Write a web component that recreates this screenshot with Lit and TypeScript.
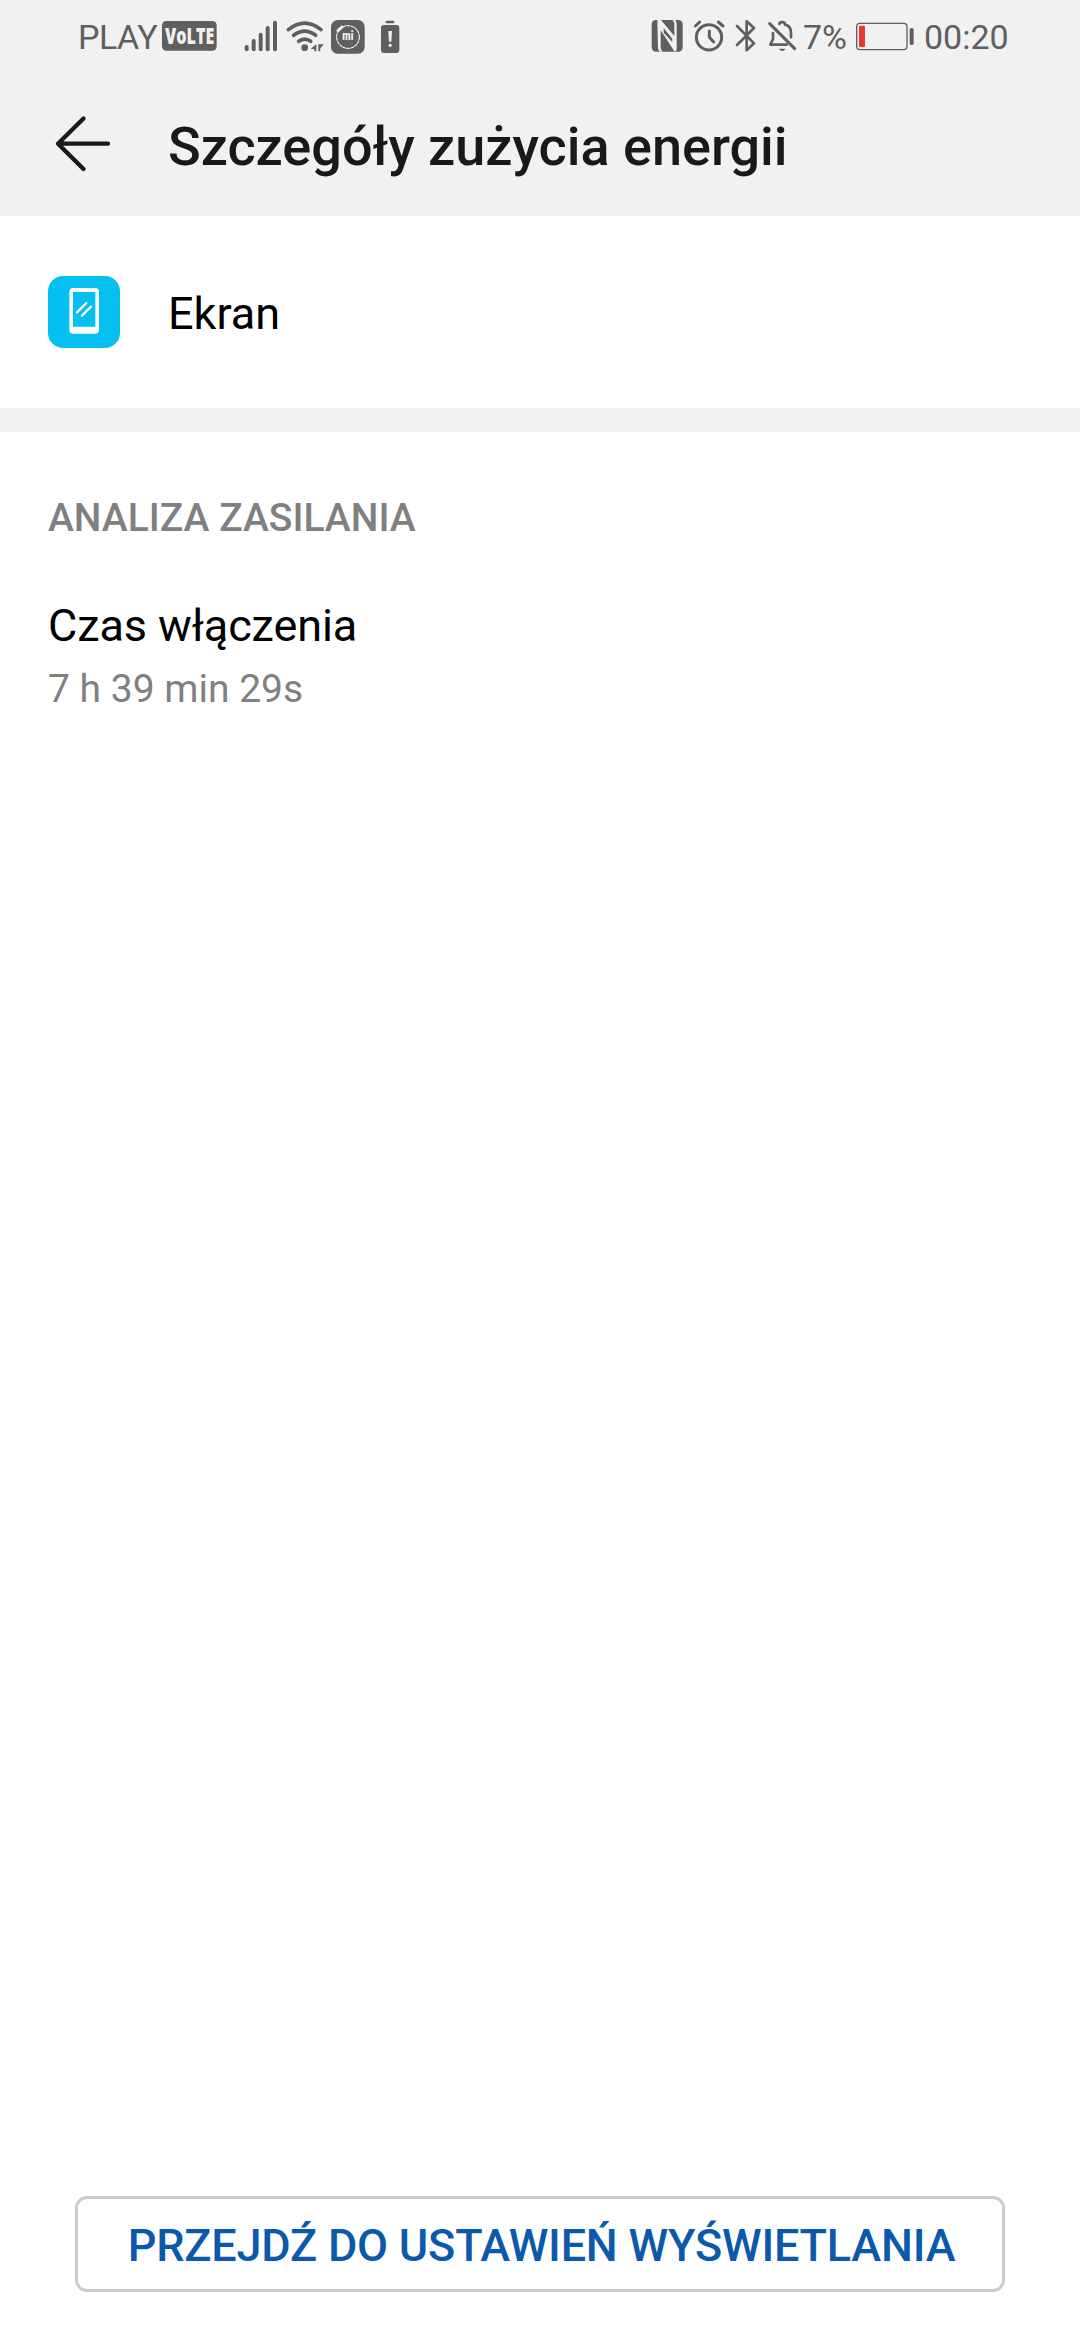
import { LitElement, html, css, svg } from "lit";
import { customElement } from "lit/decorators.js";

@customElement("status-bar")
class StatusBar extends LitElement {
  static styles = css`
    :host { display: flex; height: 75px; padding-left: 78px; color: #5f5f5f; font: 400 34px/74px Roboto, sans-serif; }
    svg { display: block; flex: none; height: 75px; fill: #5f5f5f; overflow: visible; }
    .carrier { width: 84px; flex: none; white-space: nowrap; letter-spacing: -0.5px; }
    .percent { width: 52px; margin-left: -1px; flex: none; white-space: nowrap; }
    .clock { white-space: nowrap; }
    .volte { width: 56px; }
    .signal { width: 44px; margin-left: 22px; }
    .wifi { width: 42px; }
    .app { width: 42px; }
    .low { width: 30px; margin-left: 6px; }
    .nfc { width: 40px; margin-left: 244px; }
    .alarm { width: 40px; }
    .bluetooth { width: 30px; margin-left: 3px; }
    .mute { width: 42px; margin-left: 1px; }
    .battery { width: 62px; margin-left: -1px; margin-right: 8px; }
    .line { fill: none; stroke: #5f5f5f; stroke-linecap: round; stroke-linejoin: round; }
    .light { fill: none; stroke: #f1f1f1; stroke-linecap: round; }
    .badge { font: 800 68px "Open Sans", sans-serif; fill: #f1f1f1; }
    .mi { font: 900 36px Roboto, sans-serif; fill: #f1f1f1; }
    .red { fill: #e8392c; }
  `;
  render() {
    return html`
      <span class="carrier">PLAY</span>
      <svg class="volte" viewBox="306 0 168 225">
        <rect x="306" y="63" width="164" height="89" rx="13" />
        <text class="badge" x="315" y="132" textLength="148" lengthAdjust="spacingAndGlyphs">VoLTE</text>
      </svg>
      <svg class="signal" viewBox="30 0 132 225">
        ${[[50, 135], [71, 117], [92, 98], [113, 78], [135, 62]].map(
          ([x, y]) => svg`<rect x=${x - 6} y=${y} width="12" height=${154 - y} rx="6" />`
        )}
      </svg>
      <svg class="wifi" viewBox="162 0 126 225">
        <path class="line" stroke-width="11" d="M175 89Q224 50 273 89M191 106Q224 81 257 106M206 124Q224 111 242 124" />
        <circle cx="224" cy="143" r="10" />
        <path d="M259 132V154H253V147H242ZM265 154V133H281L271 145V154Z" />
      </svg>
      <svg class="app" viewBox="288 0 126 225">
        <rect x="303" y="60" width="101" height="101" rx="20" />
        <circle class="light" cx="354" cy="111" r="34" stroke-width="3.500" stroke-dasharray="8 4" />
        <path class="light" stroke-width="9" d="M324 92L336 81" />
        <text class="mi" x="337" y="121" textLength="33" lengthAdjust="spacingAndGlyphs">mi</text>
      </svg>
      <svg class="low" viewBox="432 0 90 225">
        <rect x="467" y="62" width="26" height="8" rx="3" />
        <rect x="453" y="75" width="55" height="84" rx="9" />
        <path d="M475 93H486L484 125H477Z" fill="#f1f1f1" />
        <circle cx="480.500" cy="136" r="5" fill="#f1f1f1" />
      </svg>
      <svg class="nfc" viewBox="24 0 120 225">
        <rect x="35" y="60" width="93" height="95" rx="13" />
        <path d="M52 60L63 60L103 108V70L98 60H106L110 70V150L104 155L62 91V146L68 155H59L54 146Z" fill="#f1f1f1" />
        <path d="M71 84L97 116V126L71 98Z" />
      </svg>
      <svg class="alarm" viewBox="144 0 120 225">
        <circle class="line" cx="207" cy="112" r="38" stroke-width="9" />
        <path class="line" stroke-width="9" d="M166 78L179 66M235 66L249 78M208 93V112L221 126" />
      </svg>
      <svg class="bluetooth" viewBox="273 0 90 225">
        <path class="line" stroke-width="8" d="M291 78L342 130L320 151V64L342 84L291 135" />
      </svg>
      <svg class="mute" viewBox="366 0 126 225">
        <path class="line" stroke-width="9" d="M389 71L464 146" />
        <path class="line" stroke-width="8" d="M418 72C419 64 435 64 435 74C449 77 453 88 453 98V112M399 99V117L391 134H440" />
        <path d="M416 146H437Q427 160 416 146Z" />
      </svg>
      <span class="percent">7%</span>
      <svg class="battery" viewBox="192 0 186 225">
        <rect class="line" x="200" y="70" width="151" height="79" rx="10" stroke-width="4" />
        <rect class="red" x="207" y="77" width="18" height="64" rx="4" />
        <rect x="359" y="84" width="12" height="51" rx="5" />
      </svg>
      <span class="clock">00:20</span>
    `;
  }
}

@customElement("app-root")
class AppRoot extends LitElement {
  static styles = css`
    :host { display: flex; flex-direction: column; height: 2340px; background: #fff; color: #000; font-family: Roboto, sans-serif; }
    .top { background: #f1f1f1; height: 216px; flex: none; }
    .bar { display: flex; height: 141px; }
    .back { width: 168px; height: 141px; flex: none; fill: none; stroke: #191919; stroke-width: 4.300; stroke-linecap: round; stroke-linejoin: round; }
    h1 { margin: 0; font-size: 54px; line-height: 143px; font-weight: 500; color: #191919; white-space: nowrap; }
    .item { display: flex; align-items: center; height: 192px; flex: none; padding-left: 48px; gap: 48px; font-size: 45px; }
    .item svg { width: 72px; height: 72px; }
    .name { line-height: 53px; padding-top: 3px; }
    .divider { height: 24px; flex: none; background: #f3f3f3; }
    .section { flex: 1; padding: 63px 48px 0; }
    h2 { margin: 0; font-size: 39px; line-height: 46px; font-weight: 500; color: #808080; }
    .label { margin-top: 58px; font-size: 45px; line-height: 53px; letter-spacing: -0.1px; }
    .value { margin-top: 14px; font-size: 39px; line-height: 46px; color: #808080; }
    .action { box-sizing: border-box; height: 96px; margin: 0 75px 48px; border: 3px solid #ccc; border-radius: 12px; background: #fff; color: #0a59ab; font: 500 45px/87px Roboto, sans-serif; letter-spacing: -0.200px; padding: 3px 0 0 3px; white-space: nowrap; }
  `;
  render() {
    return html`
      <div class="top">
        <status-bar></status-bar>
        <div class="bar">
          <svg class="back" viewBox="0 75 168 141"><path d="M83.500 118.500L58 143.700L83.500 169M58 143.700H108" /></svg>
          <h1>Szczegóły zużycia energii</h1>
        </div>
      </div>
      <div class="item">
        <svg viewBox="54 78 216 216">
          <rect x="54" y="78" width="216" height="216" rx="46" fill="#04bff0" />
          <path fill="#fff" fill-rule="evenodd" d="M130 114H195Q207 114 207 126V239Q207 251 195 251H130Q118 251 118 239V126Q118 114 130 114ZM129 126V230H196V126Z" />
          <path stroke="#fff" stroke-width="7" stroke-linecap="round" d="M141 187L169 159M156 197L183 170" />
        </svg>
        <span class="name">Ekran</span>
      </div>
      <div class="divider"></div>
      <div class="section">
        <h2>ANALIZA ZASILANIA</h2>
        <div class="label">Czas włączenia</div>
        <div class="value">7 h 39 min 29s</div>
      </div>
      <button class="action">PRZEJDŹ DO USTAWIEŃ WYŚWIETLANIA</button>
    `;
  }
}
